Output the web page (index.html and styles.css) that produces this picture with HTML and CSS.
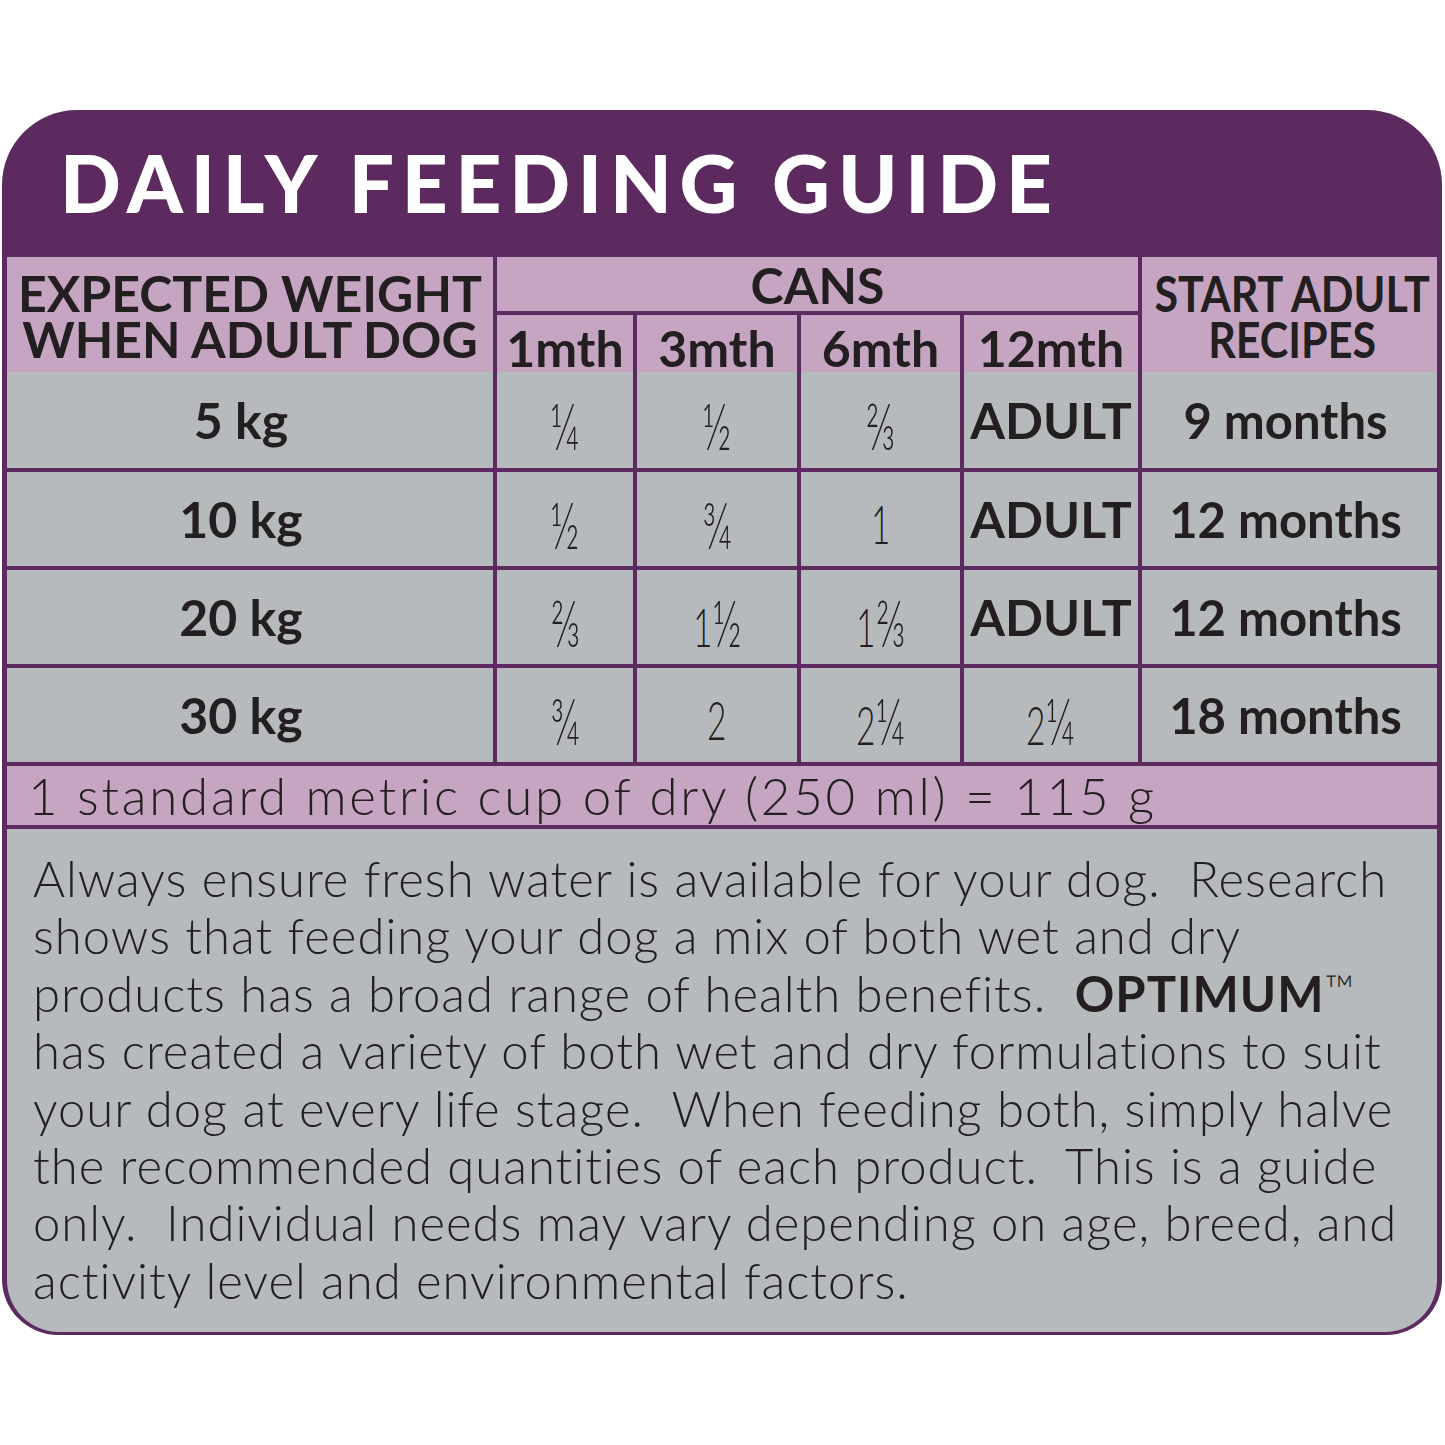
FILE: index.html
```html
<!DOCTYPE html>
<html lang="en">
<head>
<meta charset="utf-8">
<title>Daily Feeding Guide</title>
<link rel="stylesheet" href="styles.css">
</head>
<body>
<div class="page">
  <div class="card">
    <h1 class="title">DAILY FEEDING GUIDE</h1>
    <div class="head">
      <div class="cell hd weight">EXPECTED WEIGHT<br>WHEN ADULT DOG</div>
      <div class="cell hd cans">CANS</div>
      <div class="cell hd start"><span class="narrow">START ADULT<br>RECIPES</span></div>
      <div class="cell hd mth">1mth</div>
      <div class="cell hd mth">3mth</div>
      <div class="cell hd mth">6mth</div>
      <div class="cell hd mth">12mth</div>
    </div>
    <div class="body">
      <div class="cell kg">5 kg</div>
      <div class="cell"><span class="num"><span class="fr">¼</span></span></div>
      <div class="cell"><span class="num"><span class="fr">½</span></span></div>
      <div class="cell"><span class="num"><span class="fr">⅔</span></span></div>
      <div class="cell adult">ADULT</div>
      <div class="cell months">9 months</div>

      <div class="cell kg">10 kg</div>
      <div class="cell"><span class="num"><span class="fr">½</span></span></div>
      <div class="cell"><span class="num"><span class="fr">¾</span></span></div>
      <div class="cell"><span class="num">1</span></div>
      <div class="cell adult">ADULT</div>
      <div class="cell months">12 months</div>

      <div class="cell kg">20 kg</div>
      <div class="cell"><span class="num"><span class="fr">⅔</span></span></div>
      <div class="cell"><span class="num">1<span class="fr">½</span></span></div>
      <div class="cell"><span class="num">1<span class="fr">⅔</span></span></div>
      <div class="cell adult">ADULT</div>
      <div class="cell months">12 months</div>

      <div class="cell kg">30 kg</div>
      <div class="cell"><span class="num"><span class="fr">¾</span></span></div>
      <div class="cell"><span class="num">2</span></div>
      <div class="cell"><span class="num">2<span class="fr">¼</span></span></div>
      <div class="cell"><span class="num">2<span class="fr">¼</span></span></div>
      <div class="cell months">18 months</div>
    </div>
    <div class="cup">1 standard metric cup of dry (250 ml) = 115 g</div>
    <div class="note">
      <p>Always ensure fresh water is available for your dog.&nbsp; Research<br>
      shows that feeding your dog a mix of both wet and dry<br>
      products has a broad range of health benefits.&nbsp; <b>OPTIMUM</b><span class="tm">™</span><br>
      has created a variety of both wet and dry formulations to suit<br>
      your dog at every life stage.&nbsp; When feeding both, simply halve<br>
      the recommended quantities of each product.&nbsp; This is a guide<br>
      only.&nbsp; Individual needs may vary depending on age, breed, and<br>
      activity level and environmental factors.</p>
    </div>
  </div>
</div>
</body>
</html>
```

FILE: styles.css
```css
* { box-sizing: border-box; }

html, body {
  margin: 0;
  padding: 0;
  background: #ffffff;
}

body {
  font-family: "Lato", "Open Sans", sans-serif;
  color: #231f20;
}

.page {
  padding: 110px 3px 0 2px;
}

.card {
  width: 1440px;
  background: #5d2a5f;
  border-radius: 75px 75px 56px 56px;
  padding: 0 5px 3px 5px;
  overflow: hidden;
}

.title {
  margin: 0;
  height: 147px;
  padding-left: 53px;
  font-size: 80px;
  line-height: 145px;
  font-weight: 900;
  color: #ffffff;
  letter-spacing: 7.8px;
  white-space: nowrap;
}

.head,
.body {
  display: grid;
  grid-template-columns: 486px 136px 160px 159px 174px 295px;
  column-gap: 4px;
  row-gap: 4px;
}

.head {
  grid-template-rows: 54px 57px;
}

.body {
  grid-template-rows: 96px 94px 94px 94px;
}

.cell {
  background: #b6babd;
  display: flex;
  align-items: center;
  justify-content: center;
  text-align: center;
  font-weight: 700;
  font-size: 50px;
  white-space: nowrap;
}

.hd {
  background: #c6a5c3;
}

.weight {
  grid-column: 1;
  grid-row: 1 / 3;
  line-height: 46px;
  padding-top: 2px;
}

.cans {
  grid-column: 2 / 6;
  grid-row: 1;
  padding-top: 2px;
}

.start {
  grid-column: 6;
  grid-row: 1 / 3;
  line-height: 46px;
  padding-top: 2px;
  padding-left: 6px;
}

.narrow {
  display: inline-block;
  transform: scaleX(0.86);
}

.mth {
  grid-row: 2;
  padding-top: 8px;
}

.kg {
  padding-right: 18px;
}

.months {
  font-size: 49px;
  padding-right: 8px;
}

.num {
  display: inline-block;
  font-weight: 300;
  font-size: 54px;
  transform: scaleX(0.62);
  padding-top: 8px;
}

.fr {
  font-size: 66px;
}

.cup {
  margin-top: 4px;
  height: 59px;
  background: #c6a5c3;
  padding-left: 21px;
  font-size: 51px;
  font-weight: 300;
  line-height: 59px;
  letter-spacing: 2.8px;
  white-space: nowrap;
}

.note {
  margin-top: 4px;
  background: #b6babd;
  border-radius: 0 0 52px 52px;
  height: 503px;
  padding: 21px 0 0 26px;
}

.note p {
  margin: 0;
  font-size: 49px;
  font-weight: 300;
  line-height: 57.4px;
  letter-spacing: 1px;
  white-space: nowrap;
}

.note b {
  font-weight: 700;
}

.tm {
  font-size: 40px;
  line-height: 0;
  vertical-align: 0;
  position: relative;
  top: -8px;
  letter-spacing: 0;
}
```
